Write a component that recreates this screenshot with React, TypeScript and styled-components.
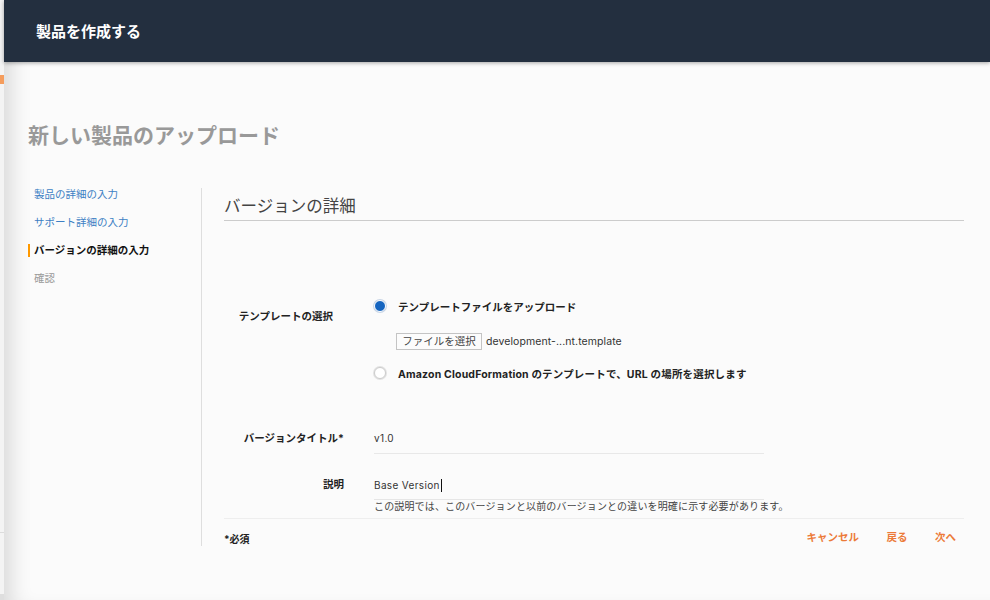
import React from 'react'
import styled, { createGlobalStyle } from 'styled-components'

const GlobalStyle = createGlobalStyle`
    html, body {
        margin: 0;
        padding: 0;
        height: 100%;
        background: #fff;
    }
    body {
        font-family: "Inter", "Noto Sans CJK JP", sans-serif;
        overflow: hidden;
    }
    * {
        box-sizing: border-box;
    }
`

const Page = styled.div`
    display: flex;
    width: 990px;
    height: 600px;
    overflow: hidden;
    background: #dedede;
`

const Backdrop = styled.div`
    display: flex;
    flex-direction: column;
    width: 4px;
    height: 594px;
    padding-top: 75px;
    background: #f4f4f4;
`

const OrangeMark = styled.div`
    width: 4px;
    height: 9px;
    background: #f59d5d;
`

const BackdropLine = styled.div`
    width: 4px;
    height: 1px;
    margin-top: 448px;
    background: #dcdcdc;
`

const Modal = styled.div`
    display: flex;
    flex-direction: column;
    width: 986px;
    height: 600px;
    background: #fbfbfb;
    box-shadow: inset 20px 0 20px -12px rgba(0, 0, 0, 0.13);
`

const Header = styled.header`
    display: flex;
    align-items: center;
    flex: 0 0 62px;
    padding: 0 0 2px 32px;
    color: #fff;
    font-size: 15px;
    font-weight: 700;
    background: #232f3f;
    box-shadow: 0 1px 4px rgba(0, 0, 0, 0.35);
`

const Body = styled.div`
    padding: 60px 26px 0 24px;
`

const Title = styled.h1`
    margin: 0 0 38px;
    color: #999;
    font-size: 21px;
    line-height: 28px;
    font-weight: 700;
`

const Columns = styled.div`
    display: flex;
`

const Side = styled.nav`
    display: flex;
    flex-direction: column;
    gap: 8px;
    width: 174px;
    border-right: 1px solid #dedede;
`

const Step = styled.div<{ $state: 'done' | 'active' | 'todo' }>`
    display: flex;
    align-items: center;
    height: 13px;
    margin: 0 0 7px;
    padding-left: ${p => (p.$state === 'active' ? '4px' : '6px')};
    font-size: 10.5px;
    line-height: 13px;
    font-weight: ${p => (p.$state === 'active' ? 700 : 400)};
    color: ${p => (p.$state === 'done' ? '#3d7fc4' : p.$state === 'active' ? '#111' : '#999')};
    border-left: ${p => (p.$state === 'active' ? '2px solid #f90' : 'none')};
`

const Main = styled.main`
    display: flex;
    flex-direction: column;
    flex: 1;
    height: 358px;
    padding-left: 22px;
`

const SectionTitle = styled.h2`
    margin: 0;
    height: 33px;
    color: #444;
    font-size: 16.5px;
    line-height: 36px;
    font-weight: 400;
    border-bottom: 1px solid #ccc;
`

const Row = styled.div<{ $top: number }>`
    display: grid;
    grid-template-columns: 120px 1fr;
    column-gap: 30px;
    margin-top: ${p => p.$top}px;
`

const Label = styled.div<{ $pad: number; $right?: number }>`
    padding-top: ${p => p.$pad}px;
    padding-right: ${p => p.$right ?? 0}px;
    color: #222;
    font-size: 10.5px;
    line-height: 14px;
    font-weight: 700;
    text-align: right;
    white-space: nowrap;
`

const Options = styled.div`
    display: flex;
    flex-direction: column;
`

const RadioRow = styled.div<{ $spread?: boolean }>`
    display: flex;
    align-items: center;
    gap: 12px;
    height: 18px;
    color: #222;
    font-size: 10.5px;
    font-weight: 700;
    letter-spacing: ${p => (p.$spread ? '0.18px' : '0')};
`

const Radio = styled.span<{ $on?: boolean }>`
    flex: 0 0 12px;
    width: 12px;
    height: 12px;
    border-radius: 50%;
    background: ${p => (p.$on ? '#1565c0' : '#fff')};
    border: 1px solid ${p => (p.$on ? '#fff' : '#ccc')};
    box-shadow: 0 0 0 1px ${p => (p.$on ? '#c9d6e6' : '#e2e2e2')};
`

const FileRow = styled.div`
    display: flex;
    align-items: center;
    gap: 4px;
    height: 17px;
    margin: 18px 0 14px 22px;
    color: #333;
    font-size: 10.5px;
    letter-spacing: 0.08px;
`

const FileButton = styled.button`
    width: 86px;
    height: 17px;
    padding: 0;
    color: #444;
    font: inherit;
    font-size: 10.5px;
    line-height: 15px;
    background: #fcfcfc;
    border: 1px solid #c4c4c4;
`

const Field = styled.div`
    width: 390px;
    height: 23px;
    color: #333;
    font-size: 10px;
    line-height: 14px;
    letter-spacing: 0.35px;
    border-bottom: 1px solid #e8e8e8;
`

const DescField = styled(Field)`
    height: 22px;
    border-bottom: 1px solid #e6e6e6;
`

const Caret = styled.span`
    display: inline-block;
    width: 1px;
    height: 13px;
    margin-left: 1px;
    vertical-align: -3px;
    background: #111;
`

const Hint = styled.div`
    color: #444;
    font-size: 10px;
    line-height: 13px;
    letter-spacing: 0.15px;
    white-space: nowrap;
`

const Footer = styled.div`
    display: flex;
    justify-content: space-between;
    align-items: flex-start;
    height: 28px;
    margin-top: 5px;
    padding-top: 12px;
    border-top: 1px solid #eee;
`

const Required = styled.div`
    margin-top: 1px;
    color: #222;
    font-size: 10px;
    line-height: 14px;
    font-weight: 700;
`

const Actions = styled.div`
    display: flex;
    gap: 27.5px;
    padding-right: 8px;
`

const Action = styled.a`
    color: #ec7a38;
    font-size: 10.5px;
    line-height: 14px;
    font-weight: 700;
    cursor: pointer;
`

export default function App() {
    return (
        <Page>
            <GlobalStyle />
            <Backdrop>
                <OrangeMark />
                <BackdropLine />
            </Backdrop>
            <Modal>
                <Header>製品を作成する</Header>
                <Body>
                    <Title>新しい製品のアップロード</Title>
                    <Columns>
                        <Side>
                            <Step $state="done">製品の詳細の入力</Step>
                            <Step $state="done">サポート詳細の入力</Step>
                            <Step $state="active">バージョンの詳細の入力</Step>
                            <Step $state="todo">確認</Step>
                        </Side>
                        <Main>
                            <SectionTitle>バージョンの詳細</SectionTitle>
                            <Row $top={76}>
                                <Label $pad={13} $right={11}>テンプレートの選択</Label>
                                <Options>
                                    <RadioRow><Radio $on />テンプレートファイルをアップロード</RadioRow>
                                    <FileRow>
                                        <FileButton>ファイルを選択</FileButton>
                                        development-...nt.template
                                    </FileRow>
                                    <RadioRow $spread><Radio />Amazon CloudFormation のテンプレートで、URL の場所を選択します</RadioRow>
                                </Options>
                            </Row>
                            <Row $top={49}>
                                <Label $pad={1}>バージョンタイトル*</Label>
                                <Field>v1.0</Field>
                            </Row>
                            <Row $top={24}>
                                <Label $pad={0}>説明</Label>
                                <div>
                                    <DescField>Base Version<Caret /></DescField>
                                    <Hint>この説明では、このバージョンと以前のバージョンとの違いを明確に示す必要があります。</Hint>
                                </div>
                            </Row>
                            <Footer>
                                <Required>*必須</Required>
                                <Actions>
                                    <Action>キャンセル</Action>
                                    <Action>戻る</Action>
                                    <Action>次へ</Action>
                                </Actions>
                            </Footer>
                        </Main>
                    </Columns>
                </Body>
            </Modal>
        </Page>
    )
}
